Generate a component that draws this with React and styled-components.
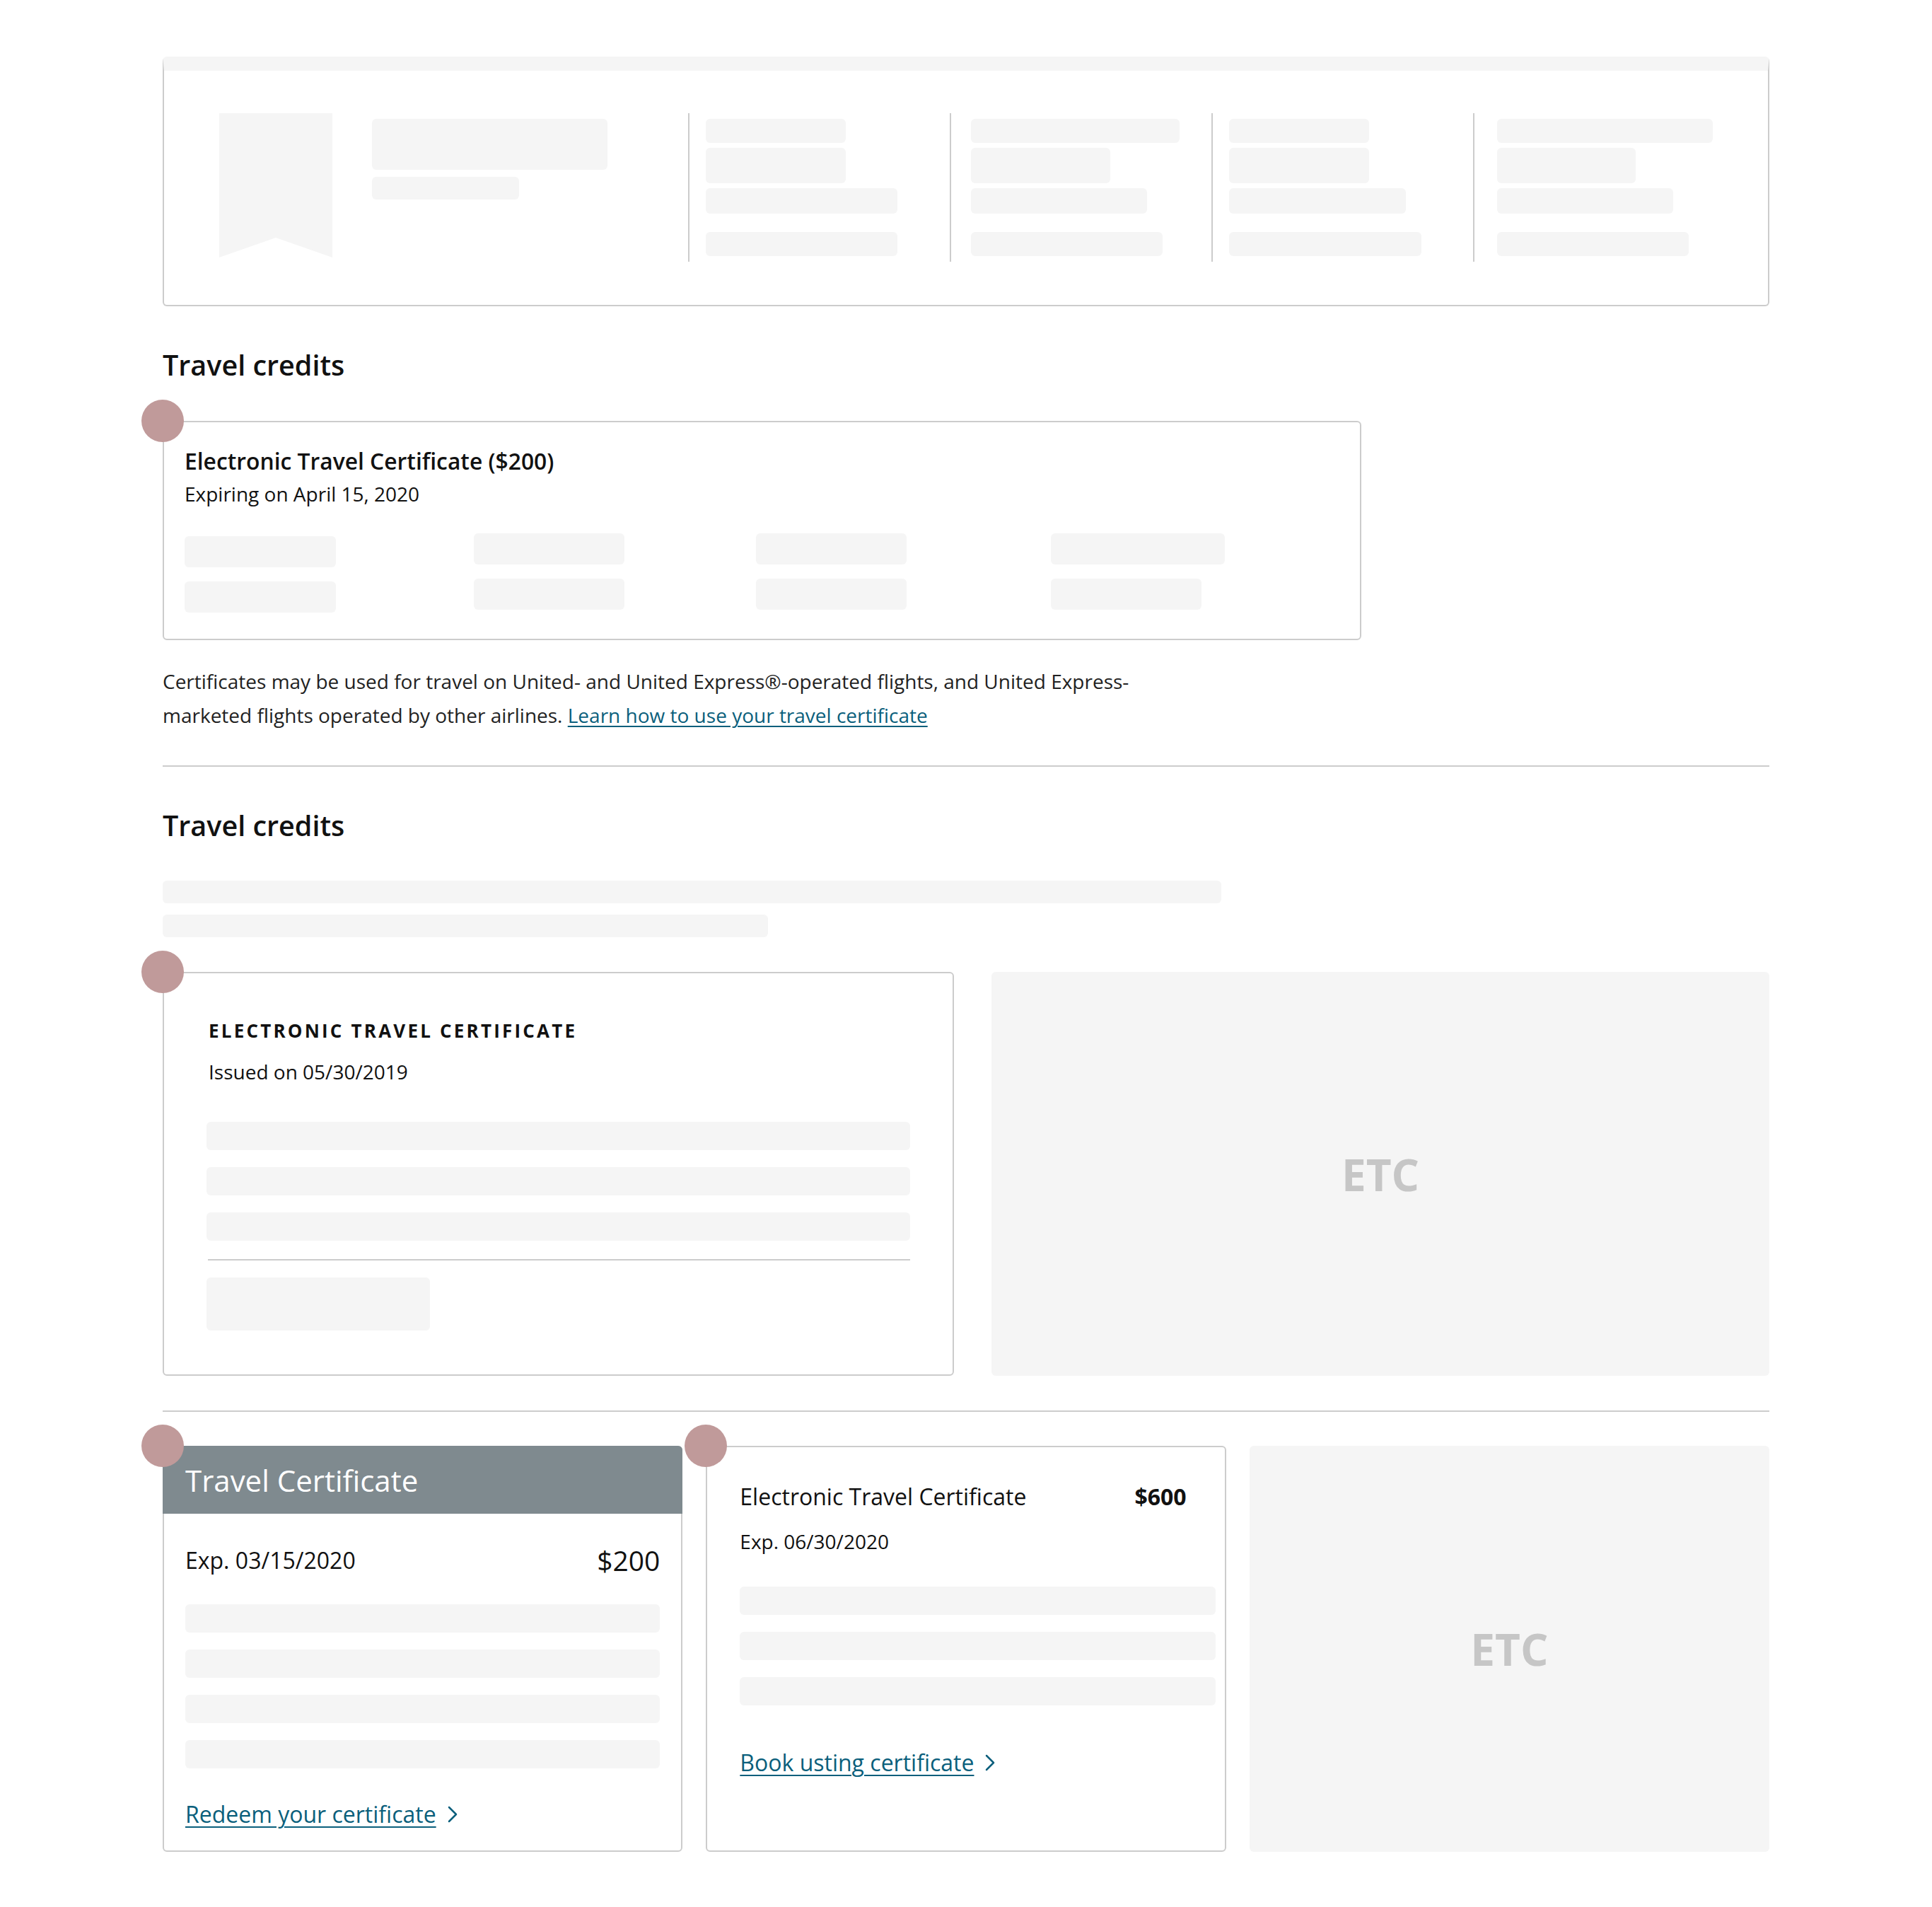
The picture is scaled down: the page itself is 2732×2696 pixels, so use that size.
import React from "react";
import styled, { createGlobalStyle } from "styled-components";

const GlobalStyle = createGlobalStyle`
  body {
    margin: 0;
    background: #fff;
    font-family: "Open Sans", "Noto Sans", sans-serif;
    color: #111;
  }
  * {
    box-sizing: border-box;
  }
`;

const summaryColumns = [
  { inset: 23, widths: [198, 198, 271, 271] },
  { inset: 28, widths: [295, 197, 249, 271] },
  { inset: 23, widths: [198, 198, 250, 272] },
  { inset: 32, widths: [305, 196, 249, 271] },
];

export default function App() {
  return (
    <>
      <GlobalStyle />
      <Page>
        <Summary>
          <Bookmark viewBox="0 0 160 204">
            <path d="M0 0H160V204L80 176L0 204Z" fill="#f5f5f5" />
          </Bookmark>
          <SummaryLead>
            <Skeleton $w={333} $h={72} />
            <Skeleton $w={208} $h={32} />
          </SummaryLead>
          {summaryColumns.map((col, i) => (
            <SummaryColumn key={i} $inset={col.inset}>
              <Skeleton $w={col.widths[0]} $h={34} />
              <Skeleton $w={col.widths[1]} $h={50} />
              <Skeleton $w={col.widths[2]} $h={36} />
              <Skeleton $w={col.widths[3]} $h={34} />
            </SummaryColumn>
          ))}
        </Summary>

        <SectionTitle>Travel credits</SectionTitle>
        <CreditCard>
          <Marker />
          <CardTitle>Electronic Travel Certificate ($200)</CardTitle>
          <CardMeta>Expiring on April 15, 2020</CardMeta>
          <StatGrid>
            <StatCell $offset>
              <Skeleton $w={214} $h={44} />
              <Skeleton $w={214} $h={44} />
            </StatCell>
            <StatCell>
              <Skeleton $w={213} $h={44} />
              <Skeleton $w={213} $h={44} />
            </StatCell>
            <StatCell>
              <Skeleton $w={213} $h={44} />
              <Skeleton $w={213} $h={44} />
            </StatCell>
            <StatCell>
              <Skeleton $w={246} $h={44} />
              <Skeleton $w={213} $h={44} />
            </StatCell>
          </StatGrid>
        </CreditCard>
        <Note>
          Certificates may be used for travel on United- and United
          Express®-operated flights, and United Express-marketed flights
          operated by other airlines.{" "}
          <InlineLink href="#">Learn how to use your travel certificate</InlineLink>
        </Note>

        <Rule />

        <SectionTitle>Travel credits</SectionTitle>
        <IntroBars>
          <Skeleton $w={1497} $h={32} />
          <Skeleton $w={856} $h={32} />
        </IntroBars>

        <FeatureRow>
          <FeatureCard>
            <Marker />
            <Eyebrow>ELECTRONIC TRAVEL CERTIFICATE</Eyebrow>
            <FeatureMeta>Issued on 05/30/2019</FeatureMeta>
            <BarStack $top={51}>
              <Skeleton $h={40} />
              <Skeleton $h={40} />
              <Skeleton $h={40} />
            </BarStack>
            <InnerRule />
            <Skeleton $w={316} $h={75} />
          </FeatureCard>
          <Placeholder>
            <PlaceholderLabel>ETC</PlaceholderLabel>
          </Placeholder>
        </FeatureRow>

        <Rule $top={49} />

        <TileRow>
          <Tile>
            <TileHeader>Travel Certificate</TileHeader>
            <Marker />
            <TileBody $pad="43px 30px 29px 30px">
              <AmountRow>
                <Expiry>Exp. 03/15/2020</Expiry>
                <Amount>$200</Amount>
              </AmountRow>
              <BarStack $top={41}>
                <Skeleton $h={40} />
                <Skeleton $h={40} />
                <Skeleton $h={40} />
                <Skeleton $h={40} />
              </BarStack>
              <ActionLink href="#" $top={43}>
                <span>Redeem your certificate</span>
                <Chevron />
              </ActionLink>
            </TileBody>
          </Tile>

          <Tile>
            <Marker />
            <TileBody $pad="50px 13px 0 46px">
              <TitleRow>
                <span>Electronic Travel Certificate</span>
                <strong>$600</strong>
              </TitleRow>
              <TileMeta>Exp. 06/30/2020</TileMeta>
              <BarStack $top={44}>
                <Skeleton $h={40} />
                <Skeleton $h={40} />
                <Skeleton $h={40} />
              </BarStack>
              <ActionLink href="#" $top={59}>
                <span>Book usting certificate</span>
                <Chevron />
              </ActionLink>
            </TileBody>
          </Tile>

          <Placeholder>
            <PlaceholderLabel>ETC</PlaceholderLabel>
          </Placeholder>
        </TileRow>
      </Page>
    </>
  );
}

function Chevron() {
  return (
    <ChevronIcon viewBox="0 0 14 24">
      <polyline points="2,2 12,12 2,22" />
    </ChevronIcon>
  );
}

const Page = styled.main`
  width: 2272px;
  margin: 0 auto;
  padding: 80px 0 76px;
`;

const Skeleton = styled.div`
  width: ${(p) => (p.$w ? `${p.$w}px` : "100%")};
  height: ${(p) => p.$h}px;
  flex-shrink: 0;
  background: #f5f5f5;
  border-radius: 6px;
`;

const Summary = styled.section`
  display: flex;
  align-items: flex-start;
  border: 2px solid #cccccc;
  border-top: 20px solid #f5f5f5;
  border-radius: 6px;
  padding: 60px 78px 61px;
`;

const Bookmark = styled.svg`
  width: 160px;
  height: 204px;
  flex-shrink: 0;
  display: block;
`;

const SummaryLead = styled.div`
  width: 447px;
  margin-left: 56px;
  padding-top: 8px;
  display: flex;
  flex-direction: column;
  gap: 10px;
`;

const SummaryColumn = styled.div`
  width: 370px;
  height: 210px;
  border-left: 2px solid #cccccc;
  padding: 8px 0 8px ${(p) => p.$inset}px;
  display: flex;
  flex-direction: column;
  gap: 7px;
  & > :last-child {
    margin-top: auto;
  }
  &:last-child {
    width: auto;
    flex: 1;
  }
`;

const SectionTitle = styled.h2`
  margin: 59px 0 55px;
  font-size: 39.5px;
  line-height: 48px;
  font-weight: 600;
  color: #111;
`;

const Marker = styled.span`
  position: absolute;
  top: -32px;
  left: -32px;
  width: 60px;
  height: 60px;
  border-radius: 50%;
  background: #c09a9a;
  z-index: 1;
`;

const CreditCard = styled.article`
  position: relative;
  width: 1695px;
  border: 2px solid #cccccc;
  border-radius: 6px;
  padding: 35px 31px 37px 29px;
`;

const CardTitle = styled.h3`
  margin: 0;
  font-size: 31.8px;
  line-height: 40px;
  font-weight: 600;
`;

const CardMeta = styled.p`
  margin: 6px 0 0;
  font-size: 28px;
  line-height: 40px;
`;

const StatGrid = styled.div`
  display: grid;
  grid-template-columns: 409px 399px 417px 1fr;
  margin-top: 36px;
`;

const StatCell = styled.div`
  display: flex;
  flex-direction: column;
  gap: 20px;
  padding-top: ${(p) => (p.$offset ? 4 : 0)}px;
`;

const Note = styled.p`
  margin: 34px 0 0;
  max-width: 1400px;
  font-size: 28px;
  line-height: 48px;
  color: #222;
`;

const InlineLink = styled.a`
  color: #0b5f7c;
  text-decoration: underline;
  text-decoration-thickness: 2px;
  text-underline-offset: 4px;
`;

const Rule = styled.hr`
  margin: ${(p) => p.$top ?? 47}px 0 0;
  border: 0;
  height: 2px;
  background: #cccccc;
`;

const IntroBars = styled.div`
  display: flex;
  flex-direction: column;
  gap: 16px;
  margin-top: -1px;
`;

const FeatureRow = styled.div`
  display: grid;
  grid-template-columns: 1119px 1100px;
  gap: 53px;
  margin-top: 49px;
`;

const FeatureCard = styled.article`
  position: relative;
  border: 2px solid #cccccc;
  border-radius: 6px;
  padding: 65px 60px 62px;
`;

const Eyebrow = styled.h3`
  margin: 0;
  padding-left: 3px;
  font-size: 26px;
  line-height: 32px;
  font-weight: 700;
  letter-spacing: 3.2px;
`;

const FeatureMeta = styled.p`
  margin: 22px 0 0;
  padding-left: 3px;
  font-size: 28px;
  line-height: 40px;
`;

const BarStack = styled.div`
  display: flex;
  flex-direction: column;
  gap: 24px;
  margin-top: ${(p) => p.$top}px;
`;

const InnerRule = styled.hr`
  margin: 26px 0 24px 2px;
  border: 0;
  height: 2px;
  background: #cccccc;
`;

const Placeholder = styled.div`
  display: flex;
  align-items: center;
  justify-content: center;
  background: #f5f5f5;
  border-radius: 6px;
`;

const PlaceholderLabel = styled.span`
  font-size: 62px;
  font-weight: 700;
  color: #c6c6c6;
`;

const TileRow = styled.div`
  display: grid;
  grid-template-columns: repeat(3, 1fr);
  gap: 33px;
  margin-top: 48px;
`;

const Tile = styled.article`
  position: relative;
  display: flex;
  flex-direction: column;
  border: 2px solid #cccccc;
  border-radius: 6px;
`;

const TileHeader = styled.header`
  display: flex;
  align-items: center;
  height: 96px;
  margin: -2px -2px 0;
  padding: 0 32px;
  background: #7f8a8f;
  border-radius: 6px 6px 0 0;
  color: #fff;
  font-size: 42px;
  font-weight: 400;
`;

const TileBody = styled.div`
  padding: ${(p) => p.$pad};
`;

const AmountRow = styled.div`
  display: flex;
  align-items: center;
  justify-content: space-between;
  height: 44px;
`;

const Expiry = styled.span`
  font-size: 32px;
`;

const Amount = styled.span`
  font-size: 39px;
`;

const TitleRow = styled.div`
  display: flex;
  justify-content: space-between;
  padding-right: 41px;
  font-size: 32px;
  line-height: 40px;
  strong {
    font-weight: 700;
  }
`;

const TileMeta = styled.p`
  margin: 23px 0 0;
  font-size: 28px;
  line-height: 40px;
`;

const ActionLink = styled.a`
  display: inline-flex;
  align-items: center;
  gap: 16px;
  margin-top: ${(p) => p.$top}px;
  font-size: 32px;
  line-height: 44px;
  color: #0b5f7c;
  text-decoration: none;
  span {
    text-decoration: underline;
    text-decoration-thickness: 2px;
    text-underline-offset: 5px;
  }
`;

const ChevronIcon = styled.svg`
  width: 14px;
  height: 24px;
  fill: none;
  stroke: #0b5f7c;
  stroke-width: 2.5;
  stroke-linecap: round;
  stroke-linejoin: round;
`;
